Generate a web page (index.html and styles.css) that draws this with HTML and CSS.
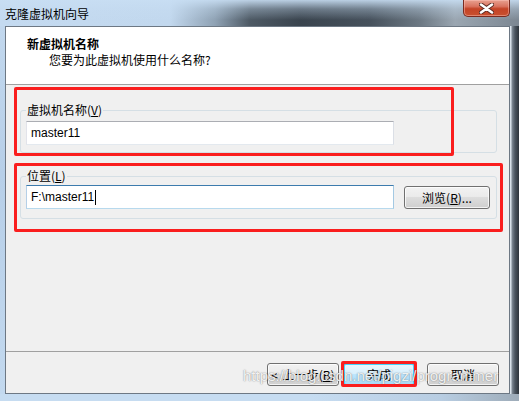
FILE: index.html
```html
<!DOCTYPE html>
<html lang="zh-CN">
<head>
<meta charset="utf-8">
<title>克隆虚拟机向导</title>
<link rel="stylesheet" href="styles.css">
</head>
<body>
<div class="window">
  <div class="titlebar">
    <span class="title">克隆虚拟机向导</span>
    <div class="close">
      <svg width="15" height="11" viewBox="0 0 15 11">
        <path d="M2 1.5 L7.5 5.5 L13 1.5 M2 9.5 L7.5 5.5 L13 9.5" fill="none" stroke="#5a2a22" stroke-width="4.4" stroke-linecap="round"/>
        <path d="M2 1.5 L7.5 5.5 L13 1.5 M2 9.5 L7.5 5.5 L13 9.5" fill="none" stroke="#ffffff" stroke-width="2.6" stroke-linecap="round"/>
      </svg>
    </div>
  </div>
  <div class="frame-left"></div>
  <div class="client">
    <div class="header">
      <div class="h-title">新虚拟机名称</div>
      <div class="h-sub">您要为此虚拟机使用什么名称?</div>
    </div>
    <div class="body">
      <fieldset class="group g-name">
        <legend>虚拟机名称(<u>V</u>)</legend>
        <div class="textbox">master11</div>
      </fieldset>
      <fieldset class="group g-loc">
        <legend>位置(<u>L</u>)</legend>
        <div class="row">
          <div class="textbox focused">F:\master11<span class="caret"></span></div>
          <div class="btn browse">浏览(<u>R</u>)...</div>
        </div>
      </fieldset>
    </div>
    <div class="footer">
      <div class="btn back">&lt; 上一步(<u>B</u>)</div>
      <div class="btn default">完成</div>
      <div class="btn cancel">取消</div>
    </div>
  </div>
  <div class="frame-right"></div>
  <div class="frame-bottom"></div>

  <div class="mark mark-name"></div>
  <div class="mark mark-loc"></div>
  <div class="mark mark-finish"></div>
  <div class="watermark">https://blog.csdn.net/pigzi/programmer</div>
</div>
</body>
</html>
```
FILE: styles.css
```css
html, body {
  margin: 0;
  padding: 0;
  background: #ffffff;
}

.window {
  position: relative;
  width: 519px;
  height: 401px;
  overflow: hidden;
  display: grid;
  grid-template-columns: 5px 505px 9px;
  grid-template-rows: 26px 368px 7px;
  font-family: "Noto Sans CJK SC", "Liberation Sans", sans-serif;
  font-size: 12px;
  color: #000;
}

/* ---- window frame ---- */
.titlebar {
  grid-column: 1 / -1;
  display: flex;
  align-items: flex-start;
  background:
    linear-gradient(to bottom, rgba(200, 222, 243, 0.9) 0, rgba(200, 222, 243, 0.35) 9px, rgba(200, 222, 243, 0) 20px),
    linear-gradient(to right, #c4daf0 0, #c2d8ee 170px, #8fa2b4 215px, #4d5964 250px, #3a444e 300px, #46515c 370px, #6c7883 420px, #9aa6b1 455px, #7c8792 519px);
}

.title {
  margin: 7px 0 0 5px;
  line-height: 14px;
  font-size: 12px;
  white-space: nowrap;
}

.close {
  margin-left: auto;
  margin-right: 9px;
  width: 47px;
  height: 17px;
  box-sizing: border-box;
  border: 1px solid #7a2b20;
  border-top: none;
  border-radius: 0 0 5px 5px;
  background: linear-gradient(to bottom, #e8a190 0, #d9735f 40%, #c44326 55%, #c9512f 100%);
  box-shadow: inset 0 0 0 1px rgba(255, 200, 190, 0.45);
  display: flex;
  align-items: center;
  justify-content: center;
}

.frame-left {
  background: linear-gradient(to bottom, #c2d8ee 0, #b7cfe8 40%, #c3d9ef 100%);
}

.frame-right {
  background: linear-gradient(to right, #d9e2ea 0, #d9e2ea 1px, #7f8a95 2px, #4b5560 5px, #2d343b 9px);
}

.frame-bottom {
  grid-column: 1 / -1;
  background: linear-gradient(to right, #c6dcf1 0, #c6dcf1 60%, #b8cde2 85%, #9eacb9 100%);
}

/* ---- client ---- */
.client {
  box-sizing: border-box;
  border: 1px solid #6d7884;
  background: #f0f0f0;
  display: flex;
  flex-direction: column;
}

.header {
  height: 58px;
  box-sizing: border-box;
  background: #ffffff;
  border-bottom: 1px solid #a0a0a0;
  padding: 9px 0 0 21px;
  line-height: 15px;
}

.h-title {
  font-weight: bold;
}

.h-sub {
  margin-left: 22px;
  margin-top: 1px;
}

.body {
  padding: 18px 12px 0 14px;
}

.group {
  margin: 0;
  padding: 4px 5px 7px 5px;
  border: 1px solid #d5dfe5;
  border-radius: 3px;
  min-inline-size: 0;
}

.group legend {
  padding: 0 1px;
  line-height: 14px;
  font-size: 12px;
}

.g-loc {
  margin-top: 16px;
  padding-top: 2px;
  padding-bottom: 9px;
}

.row {
  display: flex;
  align-items: center;
  gap: 10px;
}

.textbox {
  width: 368px;
  height: 24px;
  box-sizing: border-box;
  border: 1px solid;
  border-color: #abadb3 #dbdfe6 #e3e9ef #e2e3ea;
  background: #ffffff;
  padding-left: 4px;
  line-height: 22px;
  font-family: "Liberation Sans", sans-serif;
  font-size: 12px;
  color: #000;
  display: flex;
  align-items: center;
}

.textbox.focused {
  border-color: #3d7bad #a4c9e3 #b7d9ed #b5cfe7;
}

.caret {
  display: inline-block;
  width: 1px;
  height: 15px;
  margin-left: 1px;
  background: #000;
}

.btn {
  width: 72px;
  height: 23px;
  box-sizing: border-box;
  border: 1px solid #707070;
  border-radius: 3px;
  background: linear-gradient(to bottom, #f2f2f2 0, #ebebeb 45%, #dddddd 50%, #cfcfcf 100%);
  box-shadow: inset 0 0 0 1px rgba(255, 255, 255, 0.75);
  text-align: center;
  line-height: 21px;
  font-size: 12px;
  white-space: nowrap;
}

.btn.back {
  word-spacing: 2px;
}

.browse {
  width: 86px;
  height: 23px;
}

.footer {
  margin-top: auto;
  height: 42px;
  box-sizing: border-box;
  border-top: 1px solid #a0a0a0;
  padding: 11px 10px 0 0;
  display: flex;
  justify-content: flex-end;
  align-items: flex-start;
}

.footer .default {
  margin-left: 4px;
  border-color: #3c7fb1;
  background: linear-gradient(to bottom, #eaf6fd 0, #d9f0fc 45%, #bee6fd 50%, #a7d9f5 100%);
  box-shadow: inset 0 0 0 1px #48d5fc;
}

.footer .cancel {
  margin-left: 12px;
}

/* ---- annotations drawn over the dialog ---- */
.mark {
  position: absolute;
  box-sizing: border-box;
  border: 3px solid #fa1e1e;
  border-radius: 2px;
}

.mark-name {
  left: 14px;
  top: 87px;
  width: 440px;
  height: 69px;
}

.mark-loc {
  left: 14px;
  top: 163px;
  width: 489px;
  height: 69px;
}

.mark-finish {
  left: 341px;
  top: 361px;
  width: 76px;
  height: 26px;
}

.watermark {
  position: absolute;
  left: 243px;
  top: 367px;
  font-family: "Liberation Sans", sans-serif;
  font-size: 15px;
  color: rgba(255, 255, 255, 0.9);
  text-shadow: 0 0 1px rgba(60, 60, 60, 0.55), 0 0 2px rgba(60, 60, 60, 0.25);
  white-space: nowrap;
  pointer-events: none;
}
```
